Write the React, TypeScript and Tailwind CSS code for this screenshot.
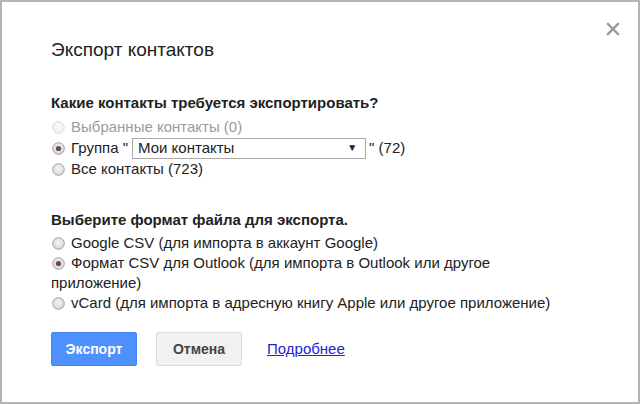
import React from "react";

function Radio({ checked, disabled }: { checked?: boolean; disabled?: boolean }) {
  const id = checked ? "rg1" : disabled ? "rg2" : "rg3";
  return (
    <svg width="13" height="13" viewBox="0 0 13 13" className="shrink-0 mr-[6px] ml-[1px]">
      <defs>
        <radialGradient id={id} cx="50%" cy="40%" r="60%">
          <stop offset="0%" stopColor={disabled ? "#fbfbfb" : "#f4f4f4"} />
          <stop offset="100%" stopColor={disabled ? "#f0f0f0" : "#d6d6d6"} />
        </radialGradient>
      </defs>
      <circle
        cx="6.5"
        cy="6.5"
        r="5.8"
        fill={`url(#${id})`}
        stroke={disabled ? "#dadada" : "#a0a0a0"}
        strokeWidth="1"
      />
      {checked && <circle cx="6.5" cy="6.5" r="2.6" fill="#6b4a55" />}
    </svg>
  );
}

export default function App() {
  return (
    <div
      className="w-[640px] h-[404px] bg-white border-2 border-[#b4b4b4] relative text-[#222]"
      style={{ fontFamily: '"Liberation Sans", Arial, sans-serif' }}
    >
      <svg
        className="absolute left-[604px] top-[20px]"
        width="14"
        height="14"
        viewBox="0 0 14 14"
      >
        <path d="M2 2L12 12M12 2L2 12" stroke="#9a9a9a" strokeWidth="2.4" strokeLinecap="square" />
      </svg>
      <div className="pl-[49px] pt-[36px]">
        <div className="text-[19px] leading-[24px]">Экспорт контактов</div>
        <div className="mt-[31px] text-[15px] font-bold leading-[20px]">Какие контакты требуется экспортировать?</div>
        <div className="text-[15px] leading-[20px] mt-[4px]">
          <div className="flex items-center h-[20px] text-[#9b9b9b]">
            <Radio disabled />
            Выбранные контакты (0)
          </div>
          <div className="flex items-center h-[22px]">
            <Radio checked />
            Группа "
            <div className="ml-[4px] mr-[3px] w-[234px] h-[21px] border border-[#a9a9a9] flex items-center justify-between pl-[5px] pr-[8px] bg-white">
              <span>Мои контакты</span>
              <span className="text-[10px]">▼</span>
            </div>
            " (72)
          </div>
          <div className="flex items-center h-[20px]">
            <Radio />
            Все контакты (723)
          </div>
        </div>
        <div className="mt-[31px] text-[15px] font-bold leading-[20px]">Выберите формат файла для экспорта.</div>
        <div className="text-[15px] leading-[20px] mt-[3px]">
          <div className="flex items-center h-[20px]">
            <Radio />
            Google CSV (для импорта в аккаунт Google)
          </div>
          <div>
            <span className="inline-flex items-center align-top h-[20px]">
              <Radio checked />
            </span>
            Формат CSV для Outlook (для импорта в Outlook или другое<br />приложение)
          </div>
          <div className="flex items-center h-[20px]">
            <Radio />
            vCard (для импорта в адресную книгу Apple или другое приложение)
          </div>
        </div>
        <div className="mt-[19px] flex items-center">
          <button className="w-[86px] h-[34px] rounded-[2px] bg-[#4d90fe] border border-[#3f85f5] text-white text-[14px] font-bold">
            Экспорт
          </button>
          <button className="ml-[19px] w-[86px] h-[34px] rounded-[2px] bg-[#f1f1f1] border border-[#dcdcdc] text-[#444] text-[14px] font-bold">
            Отмена
          </button>
          <a className="ml-[25px] text-[15px] text-[#2323d6] underline" href="#">
            Подробнее
          </a>
        </div>
      </div>
    </div>
  );
}
